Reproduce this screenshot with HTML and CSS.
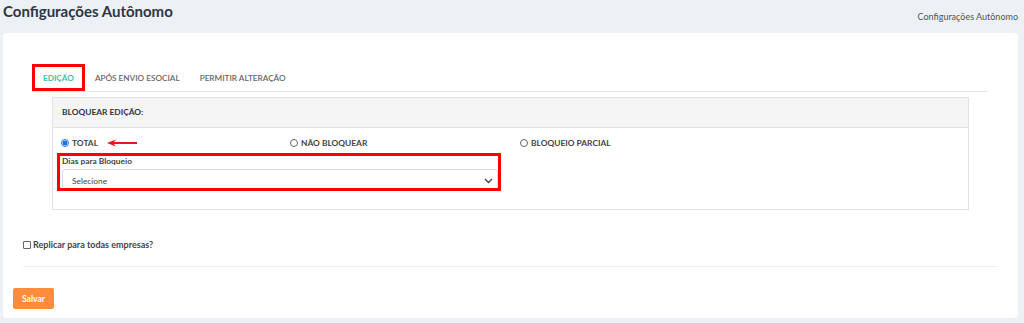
FILE: index.html
```html
<!DOCTYPE html>
<html>
<head>
    <meta charset="UTF-8">
    <title>Configurações Autônomo</title>
    <link rel="stylesheet" href="styles.css">
</head>
<body>
<div class="top">
    <h1 class="title">Configurações Autônomo</h1>
    <span class="crumb">Configurações Autônomo</span>
</div>
<div class="card">
    <div class="tabs-wrap">
        <ul class="tabs">
            <li class="tab active">EDIÇÃO</li>
            <li class="tab">APÓS ENVIO ESOCIAL</li>
            <li class="tab">PERMITIR ALTERAÇÃO</li>
        </ul>
        <div class="panel">
            <div class="panel-head">BLOQUEAR EDIÇÃO:</div>
            <div class="panel-body">
                <div class="radios">
                    <label class="radio"><span class="dot on"></span>TOTAL
                        <svg class="arrow" width="31" height="8" viewBox="0 0 31 8">
                            <path d="M0 4 L9 0.5 L7 3 L30 3 L30 5 L7 5 L9 7.5 Z" fill="#e8161b"/>
                        </svg>
                    </label>
                    <label class="radio"><span class="dot"></span>NÃO BLOQUEAR</label>
                    <label class="radio"><span class="dot"></span>BLOQUEIO PARCIAL</label>
                </div>
                <div class="field">
                    <div class="field-label">Dias para Bloqueio</div>
                    <div class="select">
                        <span>Selecione</span>
                        <svg width="9" height="6" viewBox="0 0 9 6">
                            <path d="M1 1 L4.5 4.5 L8 1" fill="none" stroke="#444" stroke-width="1.4"/>
                        </svg>
                    </div>
                </div>
            </div>
        </div>
    </div>
    <label class="check"><span class="box"></span>Replicar para todas empresas?</label>
    <div class="line"></div>
    <button class="btn">Salvar</button>
</div>
</body>
</html>
```

FILE: styles.css
```css
* {
    margin: 0;
    padding: 0;
    box-sizing: border-box;
}

html, body {
    width: 100%;
    height: 100%;
}

body {
    background: #edf0f4;
    font-family: Lato, "Open Sans", sans-serif;
    color: #444;
    overflow: hidden;
}

.top {
    display: flex;
    justify-content: space-between;
    align-items: flex-start;
    height: 33px;
    padding: 3px 6px 0 3px;
}

.title {
    font-size: 15px;
    font-weight: 700;
    color: #2f3542;
    line-height: 17px;
}

.crumb {
    font-size: 9px;
    color: #555;
    margin-top: 8px;
}

.card {
    background: #fff;
    margin: 0 6px 0 3px;
    height: 285px;
    border-radius: 4px;
    padding: 31px 20px 0 10px;
}

.tabs-wrap {
    margin-left: 19px;
    margin-right: 10px;
}

.tabs {
    list-style: none;
    display: flex;
    border-bottom: 1px solid #e6e6e6;
    height: 28px;
}

.tab {
    font-size: 8.2px;
    font-weight: 600;
    color: #666;
    padding: 0 10px;
    line-height: 28px;
}

.tab.active {
    color: #40bfa6;
    border: 3px solid #f00;
    line-height: 22px;
    padding: 0 8px;
    margin-right: 0;
    font-weight: 700;
}

.panel {
    margin: 5px 19px 0 20px;
    border: 1px solid #e2e2e2;
    height: 113px;
}

.panel-head {
    background: #f5f5f5;
    border-bottom: 1px solid #e2e2e2;
    height: 30px;
    line-height: 29px;
    padding-left: 9px;
    font-size: 8.4px;
    font-weight: 700;
    color: #333;
}

.panel-body {
    padding: 7px 10px 0 4px;
}

.radios {
    display: grid;
    grid-template-columns: 229px 230px 1fr;
    padding-left: 4px;
    height: 16px;
    align-items: center;
}

.radio {
    display: flex;
    align-items: center;
    font-size: 8.4px;
    font-weight: 700;
    color: #444;
}

.dot {
    width: 8px;
    height: 8px;
    border: 1px solid #666;
    border-radius: 50%;
    margin-right: 3px;
}

.dot.on {
    border-color: #1a73e8;
    background: radial-gradient(circle, #1a73e8 0 2.2px, #fff 2.7px);
}

.arrow {
    margin-left: 9px;
}

.field {
    width: 444px;
    border: 3px solid #f00;
    margin-top: 2px;
    height: 38px;
    padding: 0 0 0 2px;
    overflow: hidden;
}

.field-label {
    font-size: 8.4px;
    font-weight: 700;
    color: #444;
    line-height: 11px;
}

.select {
    display: flex;
    justify-content: space-between;
    align-items: center;
    margin-top: 2px;
    width: 436px;
    height: 24px;
    border: 1px solid #ddd;
    border-radius: 3px;
    padding: 0 4px 0 9px;
    font-size: 8.4px;
    color: #444;
}

.check {
    display: flex;
    align-items: center;
    margin: 29px 0 0 10px;
    font-size: 9px;
    font-weight: 700;
    color: #444;
}

.box {
    width: 8px;
    height: 8px;
    border: 1px solid #666;
    border-radius: 1px;
    margin-right: 2px;
}

.line {
    height: 1px;
    background: #eeeeee;
    margin: 16px 0 0 10px;
}

.btn {
    display: block;
    margin-top: 21px;
    background: #fd8d3c;
    border: none;
    border-radius: 2px;
    color: #fff;
    font-family: Lato, sans-serif;
    font-weight: 700;
    font-size: 8.6px;
    width: 41px;
    height: 21px;
}
```
